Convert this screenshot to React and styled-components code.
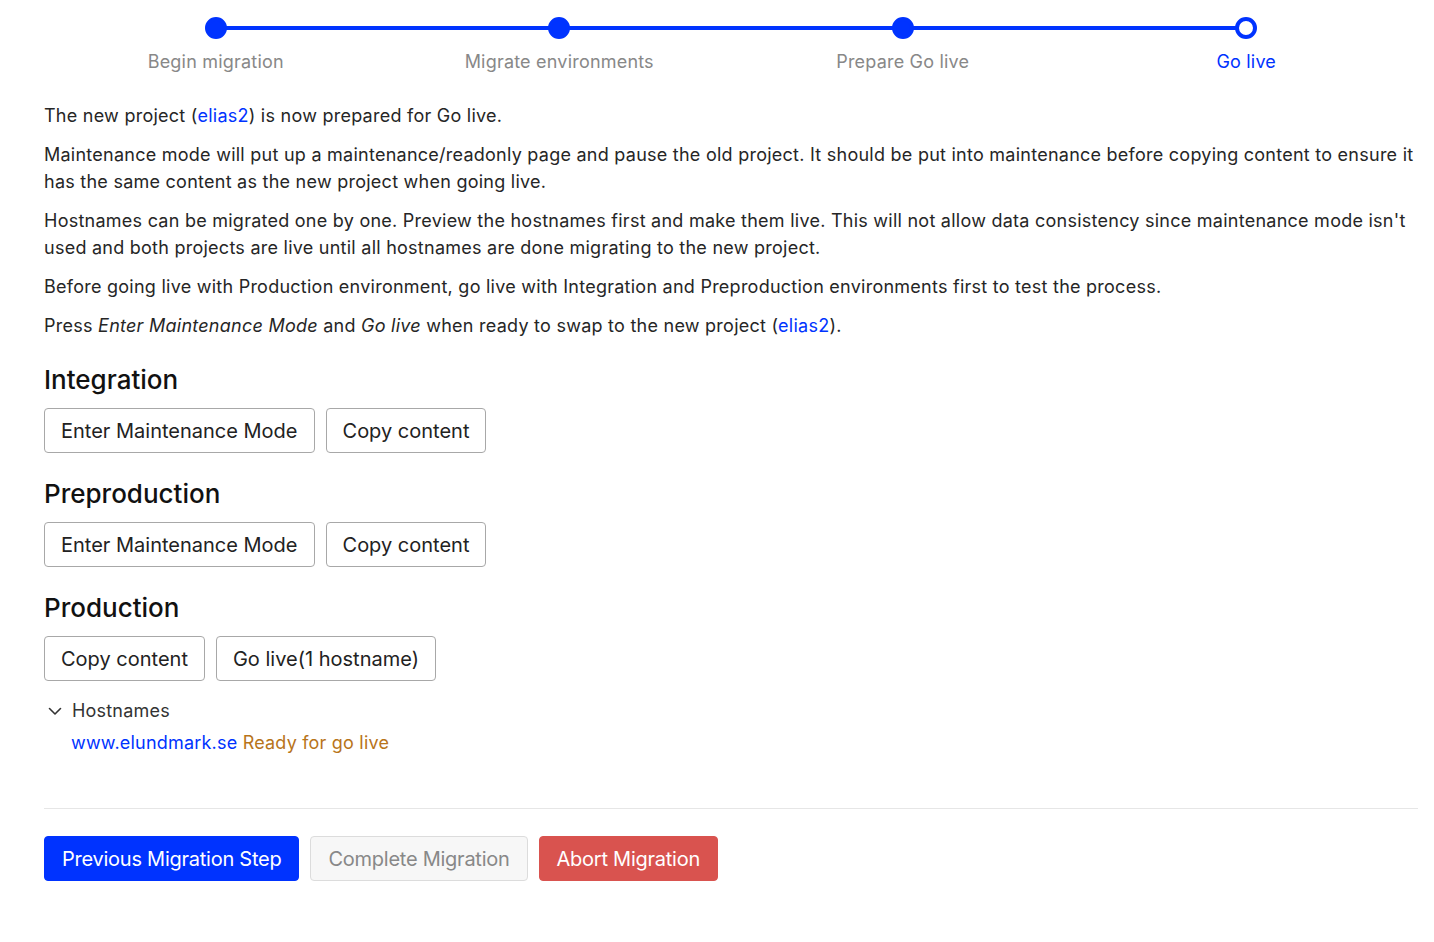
import React from "react";
import styled, { createGlobalStyle } from "styled-components";

const BLUE = "#0033ff";

const GlobalStyle = createGlobalStyle`
  body {
    margin: 0;
    background: #fff;
    font-family: Inter, "Noto Sans", sans-serif;
    color: #222;
  }
`;

const steps = ["Begin migration", "Migrate environments", "Prepare Go live", "Go live"];
const current = 3;

const environments = [
  { name: "Integration", actions: ["Enter Maintenance Mode", "Copy content"] },
  { name: "Preproduction", actions: ["Enter Maintenance Mode", "Copy content"] },
  { name: "Production", actions: ["Copy content", "Go live(1 hostname)"], hostnames: true },
];

const App = () => {
  return (
    <Page>
      <GlobalStyle />
      <Stepper>
        {steps.map((label, i) => (
          <Step key={label} first={i === 0} last={i === steps.length - 1}>
            <Track>
              <Dot active={i === current} />
            </Track>
            <StepLabel active={i === current}>{label}</StepLabel>
          </Step>
        ))}
      </Stepper>

      <Text>
        <p>The new project (<Link>elias2</Link>) is now prepared for Go live.</p>
        <p>
          Maintenance mode will put up a maintenance/readonly page and pause the old project. It should be put
          into maintenance before copying content to ensure it has the same content as the new project when going
          live.
        </p>
        <p>
          Hostnames can be migrated one by one. Preview the hostnames first and make them live. This will not
          allow data consistency since maintenance mode isn't used and both projects are live until all hostnames
          are done migrating to the new project.
        </p>
        <p>
          Before going live with Production environment, go live with Integration and Preproduction environments
          first to test the process.
        </p>
        <p>
          Press <em>Enter Maintenance Mode</em> and <em>Go live</em> when ready to swap to the new project (
          <Link>elias2</Link>).
        </p>
      </Text>

      {environments.map((env) => (
        <Section key={env.name}>
          <Heading>{env.name}</Heading>
          <ButtonRow>
            {env.actions.map((a) => (
              <OutlineButton key={a}>{a}</OutlineButton>
            ))}
          </ButtonRow>
          {env.hostnames && (
            <Hostnames>
              <Toggle>
                <svg width="16" height="16" viewBox="0 0 16 16" fill="none">
                  <path d="M2.5 5.5 8 11l5.5-5.5" stroke="#333" strokeWidth="1.6" strokeLinecap="round" strokeLinejoin="round" />
                </svg>
                Hostnames
              </Toggle>
              <HostRow>
                <Link>www.elundmark.se</Link> <Status>Ready for go live</Status>
              </HostRow>
            </Hostnames>
          )}
        </Section>
      ))}

      <Divider />

      <Footer>
        <ActionButton variant="primary">Previous Migration Step</ActionButton>
        <ActionButton variant="disabled">Complete Migration</ActionButton>
        <ActionButton variant="danger">Abort Migration</ActionButton>
      </Footer>
    </Page>
  );
};

export default App;

const Page = styled.div`
  padding: 17px 16px 40px 44px;
`;

const Stepper = styled.div`
  display: grid;
  grid-template-columns: repeat(4, 1fr);
`;

const Step = styled.div`
  display: flex;
  flex-direction: column;
  align-items: center;
  position: relative;

  &::before,
  &::after {
    content: "";
    position: absolute;
    top: 9px;
    height: 4px;
    background: ${BLUE};
    width: 50%;
  }
  &::before {
    left: 0;
    display: ${(p) => (p.first ? "none" : "block")};
  }
  &::after {
    right: 0;
    display: ${(p) => (p.last ? "none" : "block")};
  }
`;

const Track = styled.div`
  height: 22px;
  display: flex;
  align-items: center;
  position: relative;
  z-index: 1;
`;

const Dot = styled.span`
  width: 22px;
  height: 22px;
  border-radius: 50%;
  box-sizing: border-box;
  background: ${(p) => (p.active ? "#fff" : BLUE)};
  border: 4px solid ${BLUE};
`;

const StepLabel = styled.div`
  margin-top: 11px;
  font-size: 18px;
  line-height: 24px;
  letter-spacing: 0.2px;
  color: ${(p) => (p.active ? BLUE : "#888")};
`;

const Text = styled.div`
  margin-top: 28px;
  font-size: 18px;
  line-height: 27px;
  letter-spacing: 0.25px;
  color: #262626;

  p {
    margin: 0 0 12px;
  }
`;

const Link = styled.a`
  color: ${BLUE};
  text-decoration: none;
  cursor: pointer;
`;

const Section = styled.section`
  margin-top: 25px;
`;

const Heading = styled.h2`
  margin: 0 0 12px;
  font-size: 26px;
  line-height: 32px;
  font-weight: 500;
  color: #111;
`;

const ButtonRow = styled.div`
  display: flex;
  gap: 11px;
`;

const OutlineButton = styled.button`
  height: 45px;
  padding: 0 16px;
  font-family: inherit;
  font-size: 20px;
  color: #222;
  background: #fff;
  border: 1px solid #a8a8a8;
  border-radius: 4px;
  cursor: pointer;
`;

const Hostnames = styled.div`
  margin-top: 16px;
  font-size: 18px;
  line-height: 27px;
  letter-spacing: 0.2px;
`;

const Toggle = styled.div`
  display: flex;
  align-items: center;
  gap: 9px;
  padding-left: 3px;
  color: #333;
`;

const HostRow = styled.div`
  margin-top: 5px;
  padding-left: 27px;
`;

const Status = styled.span`
  color: #b8741a;
`;

const Divider = styled.hr`
  margin: 52px 0 27px;
  border: none;
  border-top: 1px solid #e6e6e6;
`;

const variants = {
  primary: { bg: BLUE, border: BLUE, color: "#fff" },
  disabled: { bg: "#f7f7f7", border: "#dcdcdc", color: "#888" },
  danger: { bg: "#d9534f", border: "#d9534f", color: "#fff" },
};

const Footer = styled.div`
  display: flex;
  gap: 11px;
`;

const ActionButton = styled.button`
  height: 45px;
  padding: 0 17px;
  font-family: inherit;
  font-size: 20px;
  letter-spacing: -0.25px;
  border-radius: 4px;
  cursor: pointer;
  background: ${(p) => variants[p.variant].bg};
  border: 1px solid ${(p) => variants[p.variant].border};
  color: ${(p) => variants[p.variant].color};
`;
